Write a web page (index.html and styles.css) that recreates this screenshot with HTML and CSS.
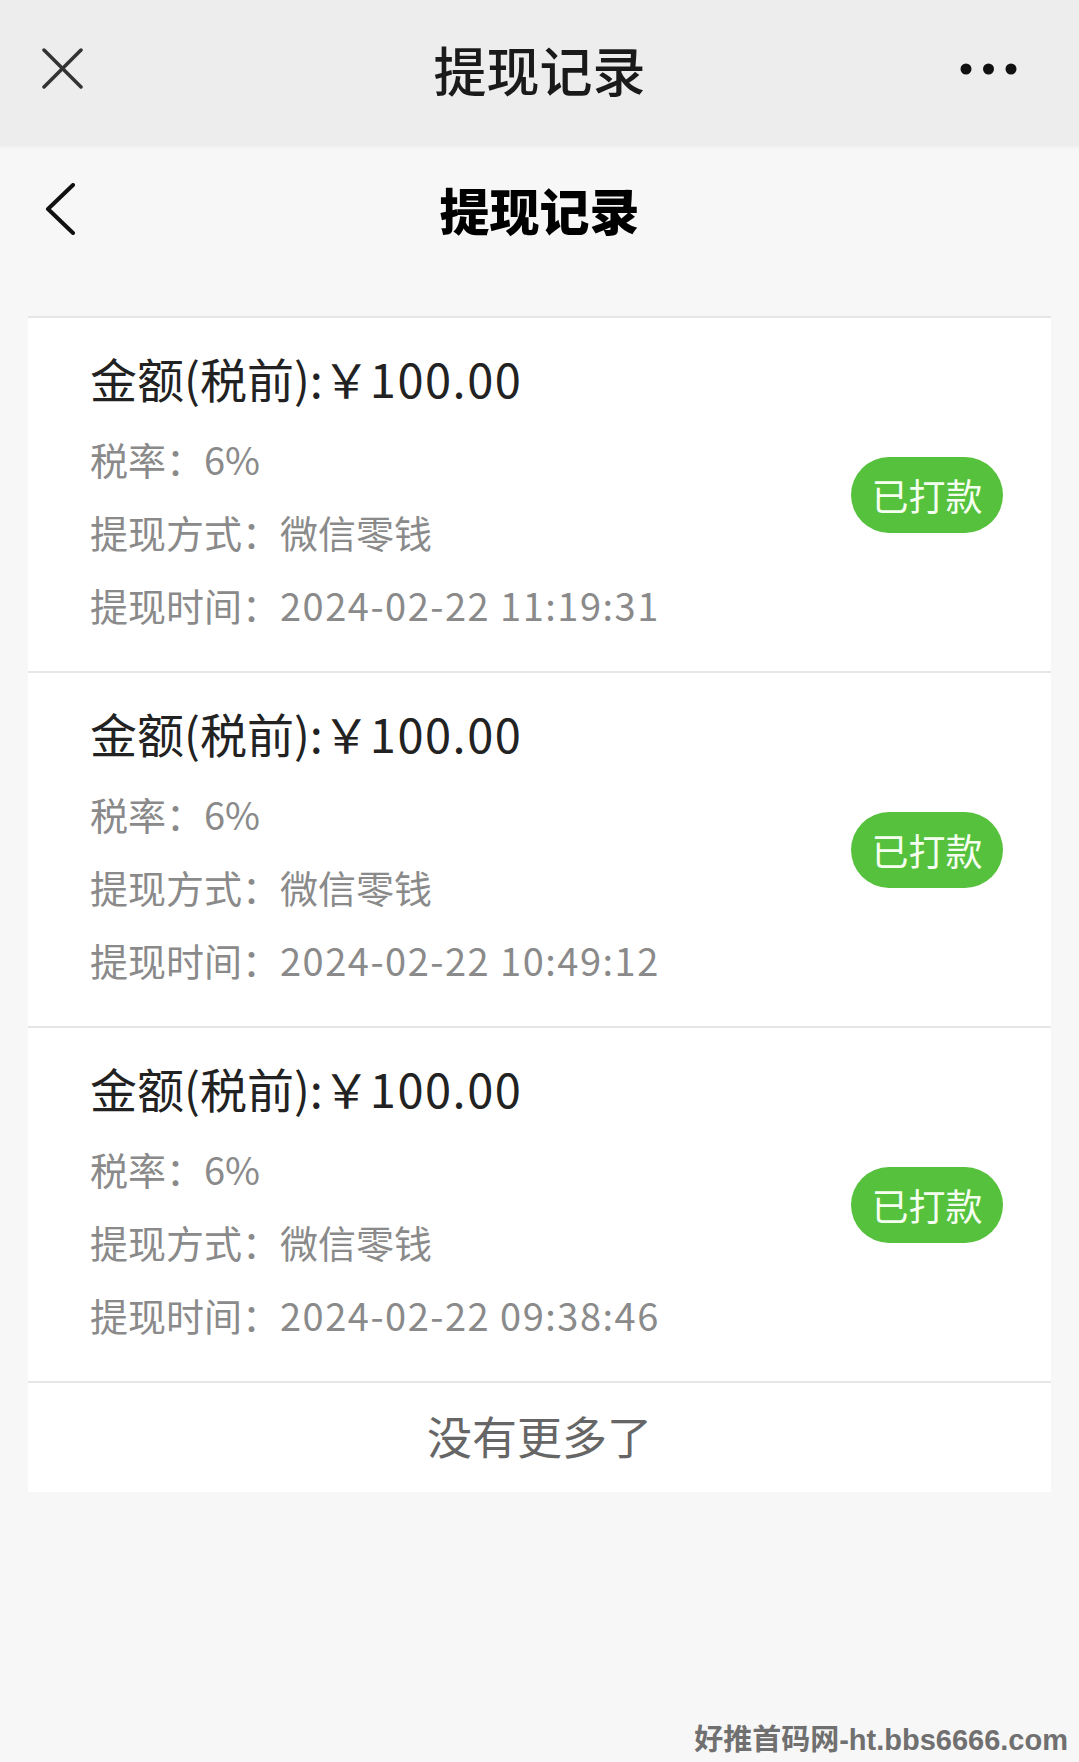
FILE: index.html
```html
<!DOCTYPE html>
<html>

<head>
  <meta charset="utf-8">
  <title>提现记录</title>
  <link rel="stylesheet" href="styles.css">
</head>

<body>
  <!-- Window bar -->
  <div class="topbar">
    <div class="topbar-left">
      <svg class="icon-close" width="41" height="41" viewBox="0 0 41 41">
        <line x1="2" y1="2" x2="39" y2="39" />
        <line x1="39" y1="2" x2="2" y2="39" />
      </svg>
    </div>
    <div class="topbar-title">提现记录</div>
    <div class="topbar-right">
      <svg width="57" height="12" viewBox="0 0 57 12">
        <circle cx="6" cy="6" r="5.5" />
        <circle cx="28.5" cy="6" r="5.5" />
        <circle cx="51" cy="6" r="5.5" />
      </svg>
    </div>
  </div>

  <!-- Page header -->
  <div class="navbar">
    <div class="navbar-left">
      <svg class="icon-back" width="31" height="52" viewBox="0 0 31 52">
        <polyline points="28,2 3,26 28,50" />
      </svg>
    </div>
    <div class="navbar-title">提现记录</div>
    <div></div>
  </div>

  <div class="record-list">
    <div class="record">
      <div class="record-info">
        <div class="record-amount">金额(税前):￥<span class="num">100.00</span></div>
        <div class="record-row">税率：6%</div>
        <div class="record-row">提现方式：微信零钱</div>
        <div class="record-row">提现时间：<span class="num">2024-02-22 11:19:31</span></div>
      </div>
      <div class="badge">已打款</div>
    </div>

    <div class="record">
      <div class="record-info">
        <div class="record-amount">金额(税前):￥<span class="num">100.00</span></div>
        <div class="record-row">税率：6%</div>
        <div class="record-row">提现方式：微信零钱</div>
        <div class="record-row">提现时间：<span class="num">2024-02-22 10:49:12</span></div>
      </div>
      <div class="badge">已打款</div>
    </div>

    <div class="record">
      <div class="record-info">
        <div class="record-amount">金额(税前):￥<span class="num">100.00</span></div>
        <div class="record-row">税率：6%</div>
        <div class="record-row">提现方式：微信零钱</div>
        <div class="record-row">提现时间：<span class="num">2024-02-22 09:38:46</span></div>
      </div>
      <div class="badge">已打款</div>
    </div>

    <div class="list-end">没有更多了</div>
  </div>

  <div class="watermark">好推首码网-ht.bbs6666.com</div>
</body>

</html>
```

FILE: styles.css
```css
html,
body {
  margin: 0;
  padding: 0;
}

body {
  position: relative;
  min-height: 100vh;
  background: #F7F7F7;
  font-family: "Noto Sans CJK SC", "Noto Sans", sans-serif;
}

.topbar {
  display: grid;
  grid-template-columns: 1fr auto 1fr;
  align-items: center;
  height: 137px;
  padding-bottom: 9px;
  background: #EDEDED;
  box-shadow: 0 2px 4px rgba(0, 0, 0, 0.03);
}

.topbar-left {
  padding-left: 42px;
  display: flex;
}

.icon-close line {
  stroke: #333333;
  stroke-width: 3.5;
  stroke-linecap: round;
}

.topbar-title {
  font-size: 53px;
  font-weight: 500;
  color: #1A1A1A;
}

.topbar-right {
  display: flex;
  justify-content: flex-end;
  padding-right: 62px;
  fill: #111111;
}

.navbar {
  display: grid;
  grid-template-columns: 1fr auto 1fr;
  align-items: center;
  height: 126px;
  padding-bottom: 8px;
}

.navbar-left {
  padding-left: 45px;
  display: flex;
}

.icon-back polyline {
  fill: none;
  stroke: #111111;
  stroke-width: 4;
  stroke-linecap: round;
  stroke-linejoin: round;
}

.navbar-title {
  font-size: 50px;
  font-weight: 900;
  color: #000000;
}

.record-list {
  margin: 36px 28px 0 28px;
}

.record {
  display: flex;
  align-items: center;
  justify-content: space-between;
  background: #FFFFFF;
  border-top: 2px solid #E6E6E6;
  padding: 31px 48px 30px 62px;
}

.record-amount {
  font-size: 47px;
  line-height: 57px;
  color: #222222;
  margin-bottom: 16px;
}

.record-row {
  font-size: 38px;
  line-height: 73px;
  color: #8A8A8A;
}

.num {
  letter-spacing: 1.5px;
}

.badge {
  width: 152px;
  height: 76px;
  line-height: 76px;
  border-radius: 38px;
  background: #56C13C;
  color: #F4FFF0;
  font-size: 37px;
  text-align: center;
}

.list-end {
  background: #FFFFFF;
  border-top: 2px solid #E6E6E6;
  height: 109px;
  line-height: 105px;
  text-align: center;
  font-size: 45px;
  color: #666666;
}

.watermark {
  position: absolute;
  right: 11px;
  bottom: 4px;
  font-family: "Liberation Sans", "Noto Sans CJK SC", sans-serif;
  font-size: 29px;
  font-weight: bold;
  color: #707070;
}
```
